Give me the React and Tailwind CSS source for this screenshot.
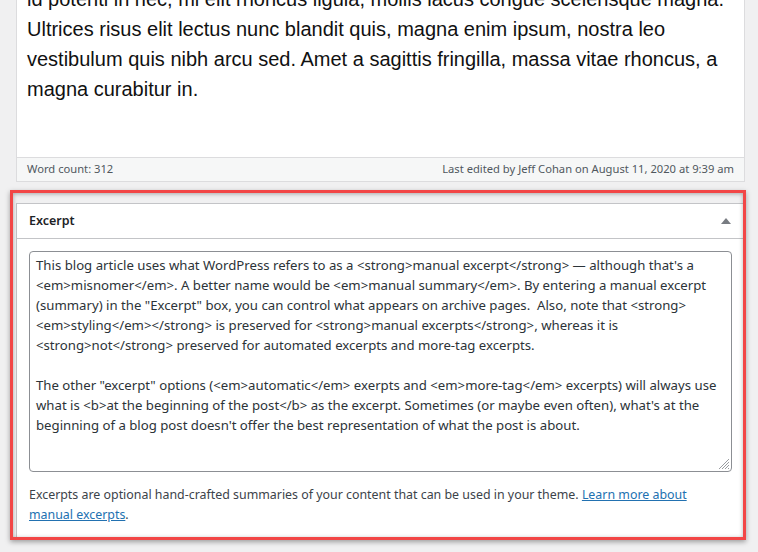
import React from 'react';

const bodyLines = [
  'id potenti in nec, mi elit rhoncus ligula, mollis lacus congue scelerisque magna.',
  'Ultrices risus elit lectus nunc blandit quis, magna enim ipsum, nostra leo',
  'vestibulum quis nibh arcu sed. Amet a sagittis fringilla, massa vitae rhoncus, a',
  'magna curabitur in.',
];

const excerptLines = [
  'This blog article uses what WordPress refers to as a <strong>manual excerpt</strong> — although that\'s a',
  '<em>misnomer</em>. A better name would be <em>manual summary</em>. By entering a manual excerpt',
  '(summary) in the "Excerpt" box, you can control what appears on archive pages.  Also, note that <strong>',
  '<em>styling</em></strong> is preserved for <strong>manual excerpts</strong>, whereas it is',
  '<strong>not</strong> preserved for automated excerpts and more-tag excerpts.',
  '',
  'The other "excerpt" options (<em>automatic</em> exerpts and <em>more-tag</em> excerpts) will always use',
  'what is <b>at the beginning of the post</b> as the excerpt. Sometimes (or maybe even often), what\'s at the',
  'beginning of a blog post doesn\'t offer the best representation of what the post is about.',
];

const ui = "font-['Noto_Sans',sans-serif]";

function ResizeGrip() {
  return (
    <svg className="absolute right-[1px] bottom-[1px]" width="14" height="14" viewBox="0 0 14 14">
      <path d="M13 3 L3 13 M13 6 L6 13 M13 9 L9 13 M13 12 L12 13" stroke="#9a9da1" strokeWidth="1" fill="none" />
    </svg>
  );
}

export default function App() {
  return (
    <div className="relative h-[552px] w-[758px] overflow-hidden bg-[#f0f0f1]">
      {/* editor */}
      <div className="ml-[16px] w-[729px] border-x border-b border-[#dcdcde] bg-white">
        <div className="h-[157px] overflow-hidden px-[10px]">
          <div className="-mt-[16px] font-['Liberation_Sans',Arial,sans-serif] text-[20px] leading-[30px] text-[#111]">
            {bodyLines.map((l) => (
              <div key={l} className="whitespace-nowrap">{l}</div>
            ))}
          </div>
        </div>
        <div className={`flex h-[24px] items-center justify-between border-t border-[#dcdcde] bg-[#f6f7f7] px-[10px] text-[11.2px] text-[#50575e] ${ui}`}>
          <span>Word count: 312</span>
          <span>Last edited by Jeff Cohan on August 11, 2020 at 9:39 am</span>
        </div>
      </div>

      {/* excerpt postbox */}
      <div className={`ml-[16px] mt-[21px] w-[729px] border border-[#c3c4c7] bg-white ${ui}`}>
        <div className="flex h-[35px] items-center justify-between border-b border-[#c3c4c7] px-[12px]">
          <h2 className="text-[12.5px] font-semibold text-[#1d2327]">Excerpt</h2>
          <svg width="10" height="6" viewBox="0 0 10 6" className="mr-[1px]">
            <path d="M5 0 L10 6 L0 6 Z" fill="#787c82" />
          </svg>
        </div>
        <div className="p-[12px]">
          <div className="relative h-[221px] rounded-[4px] border border-[#8c8f94] px-[6px] pt-[3px] text-[13.2px] leading-[20px] text-[#2c3338]">
            {excerptLines.map((l, i) => (
              <div key={i} className="h-[20px] whitespace-pre">{l}</div>
            ))}
            <ResizeGrip />
          </div>
          <p className="mt-[13px] text-[12.4px] leading-[20px] text-[#3c434a]">
            Excerpts are optional hand-crafted summaries of your content that can be used in your theme.{' '}
            <a href="#" className="text-[#2271b1] underline">
              Learn more about
              <br />
              manual excerpts
            </a>
            .
          </p>
        </div>
      </div>

      {/* annotation frame */}
      <div className="pointer-events-none absolute left-[10px] top-[190px] h-[350px] w-[736px] border-[3px] border-[#f24646] shadow-[0_2px_5px_rgba(0,0,0,0.35),inset_0_1px_4px_rgba(0,0,0,0.3)]" />
    </div>
  );
}
